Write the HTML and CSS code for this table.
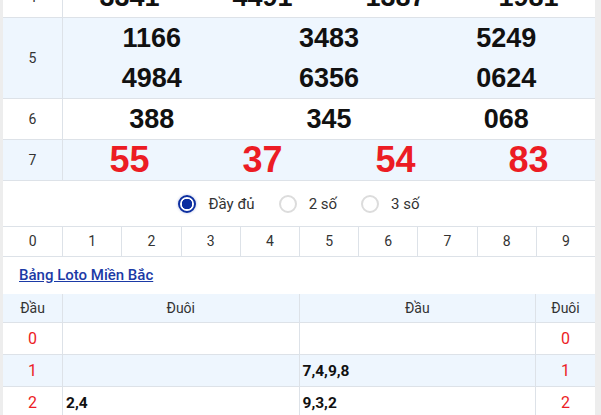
FILE: index.html
```html
<!DOCTYPE html>
<html lang="vi">
<head>
  <meta charset="UTF-8" />
  <meta name="viewport" content="width=device-width, initial-scale=1.0"/>
  <title>Kết quả xổ số Miền Bắc</title>
  <link rel="stylesheet" href="styles.css">
</head>
<body>
  <div class="box">
    <table class="kq">
      <tr>
        <td class="giai">4</td>
        <td><div class="so so4"><span>3341</span><span>4491</span><span>1387</span><span>1981</span></div></td>
      </tr>
      <tr class="alt">
        <td class="giai">5</td>
        <td><div class="so so3"><span>1166</span><span>3483</span><span>5249</span><span>4984</span><span>6356</span><span>0624</span></div></td>
      </tr>
      <tr>
        <td class="giai">6</td>
        <td><div class="so so3"><span>388</span><span>345</span><span>068</span></div></td>
      </tr>
      <tr class="alt">
        <td class="giai">7</td>
        <td><div class="so so4 red"><span>55</span><span>37</span><span>54</span><span>83</span></div></td>
      </tr>
    </table>

    <div class="options">
      <label><input type="radio" name="kieu" checked> Đầy đủ</label>
      <label><input type="radio" name="kieu"> 2 số</label>
      <label><input type="radio" name="kieu"> 3 số</label>
    </div>

    <div class="digits">
      <span>0</span><span>1</span><span>2</span><span>3</span><span>4</span>
      <span>5</span><span>6</span><span>7</span><span>8</span><span>9</span>
    </div>

    <div class="title"><a href="#">Bảng Loto Miền Bắc</a></div>

    <table class="loto">
      <tr class="alt">
        <th class="dau">Đầu</th>
        <th>Đuôi</th>
        <th>Đầu</th>
        <th class="dau">Đuôi</th>
      </tr>
      <tr>
        <td class="num">0</td>
        <td></td>
        <td></td>
        <td class="num">0</td>
      </tr>
      <tr class="alt">
        <td class="num">1</td>
        <td></td>
        <td class="val">7,4,9,8</td>
        <td class="num">1</td>
      </tr>
      <tr>
        <td class="num">2</td>
        <td class="val">2,4</td>
        <td class="val">9,3,2</td>
        <td class="num">2</td>
      </tr>
    </table>
  </div>
</body>
</html>
```

FILE: styles.css
```css
body {
  margin: 0;
  background: #ededed;
  font-family: Roboto, "Liberation Sans", sans-serif;
  color: #333;
  font-size: 14px;
}

.box {
  width: 592px;
  margin: -23px 0 0 3px;
  background: #fff;
}

table {
  width: 100%;
  border-collapse: collapse;
  table-layout: fixed;
}

td, th {
  border: 1px solid #dde2e8;
  padding: 0;
}

tr:first-child td, tr:first-child th {
  border-top: none;
}

td:first-child, th:first-child {
  border-left: none;
}

td:last-child, th:last-child {
  border-right: none;
}

.alt {
  background: #eef6fe;
}

.giai {
  width: 59px;
  text-align: center;
  font-size: 14px;
}

.so {
  display: grid;
  font-family: "Liberation Sans", Arial, sans-serif;
  font-weight: bold;
  font-size: 27px;
  line-height: 40px;
  color: #111;
  text-align: center;
}

.so3 {
  grid-template-columns: repeat(3, 1fr);
}

.so4 {
  grid-template-columns: repeat(4, 1fr);
}

.red {
  color: #ec1c24;
  font-size: 36px;
}

.options {
  display: flex;
  justify-content: center;
  align-items: center;
  gap: 24px;
  height: 45px;
  font-size: 15px;
}

.options label {
  display: flex;
  align-items: center;
  gap: 12px;
  color: #333;
}

.options input {
  appearance: none;
  margin: 0;
  width: 18px;
  height: 18px;
  border: 2px solid #dcdcdc;
  border-radius: 50%;
  background: #fff;
}

.options input:checked {
  border-color: #0d2fa0;
  box-shadow: 0 0 3px rgba(13, 47, 160, 0.3);
  background: radial-gradient(circle, #0d2fa0 0 5px, #fff 5.5px);
}

.digits {
  display: grid;
  grid-template-columns: repeat(10, 1fr);
  border-top: 1px solid #dde2e8;
  border-bottom: 1px solid #dde2e8;
}

.digits span {
  text-align: center;
  line-height: 29px;
  border-left: 1px solid #dde2e8;
}

.digits span:first-child {
  border-left: none;
}

.title {
  padding: 0 16px;
  line-height: 37px;
}

.title a {
  color: #1b3aa6;
  font-size: 15px;
  font-weight: 500;
}

.loto th {
  font-weight: normal;
  height: 28px;
}

.loto .dau {
  width: 59px;
}

.loto td {
  height: 31px;
}

.loto .num {
  text-align: center;
  color: #ec1c24;
  font-size: 16px;
}

.loto .val {
  font-weight: bold;
  font-size: 15.5px;
  padding-left: 3px;
  color: #111;
}
```
